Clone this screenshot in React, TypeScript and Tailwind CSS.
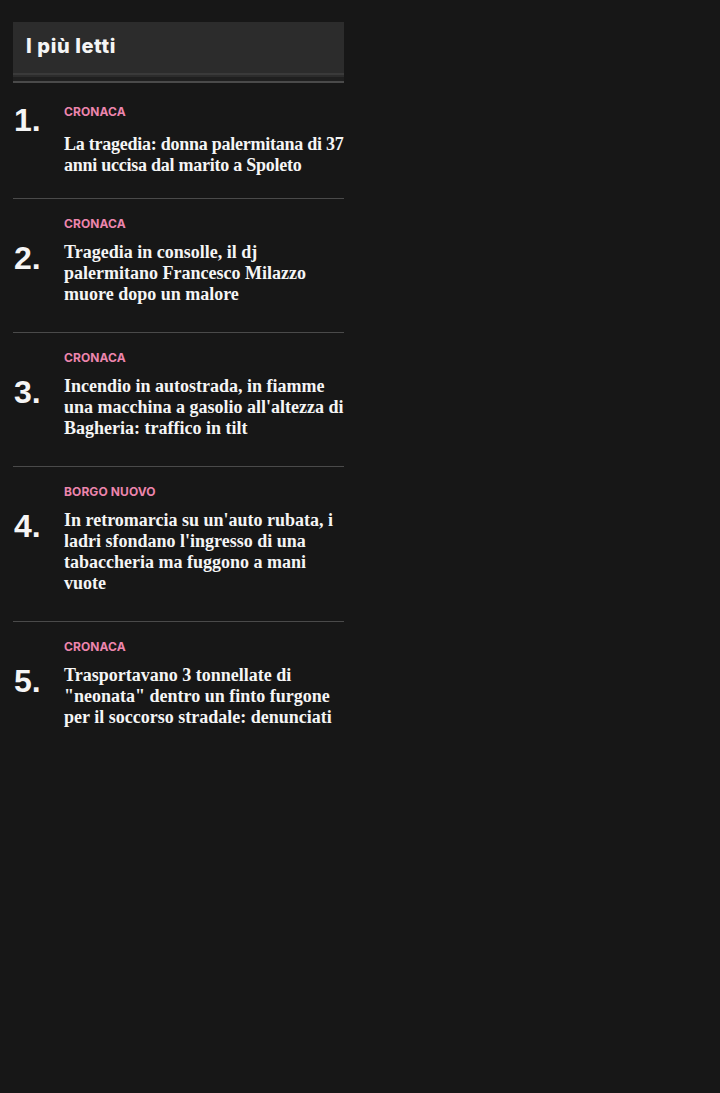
import React from "react";

type Item = { cat: string; lines: string[]; first?: boolean };

const items: Item[] = [
  { cat: "CRONACA", lines: ["La tragedia: donna palermitana di 37", "anni uccisa dal marito a Spoleto"], first: true },
  { cat: "CRONACA", lines: ["Tragedia in consolle, il dj", "palermitano Francesco Milazzo", "muore dopo un malore"] },
  { cat: "CRONACA", lines: ["Incendio in autostrada, in fiamme", "una macchina a gasolio all'altezza di", "Bagheria: traffico in tilt"] },
  { cat: "BORGO NUOVO", lines: ["In retromarcia su un'auto rubata, i", "ladri sfondano l'ingresso di una", "tabaccheria ma fuggono a mani", "vuote"] },
  { cat: "CRONACA", lines: ["Trasportavano 3 tonnellate di", "\"neonata\" dentro un finto furgone", "per il soccorso stradale: denunciati"] },
];

export default function App() {
  return (
    <div className="min-h-screen bg-[#171717] pt-[22px] pl-[13px]">
      <div className="w-[331px]">
        <div className="h-[51px] bg-[#2c2c2c] pl-[13px] pb-[3px] flex items-center">
          <h2 className="text-[20px] leading-[28px] font-extrabold tracking-[0.6px] text-[#f5f5f5] font-['Inter',sans-serif]">I più letti</h2>
        </div>
        <div className="h-[2px] bg-[#3a3a3a]" />
        <div className="h-[2px] bg-[#2c2c2c]" />
        <div className="h-[4px] bg-[#1f1f1f]" />
        <div className="h-[2px] bg-[#4a4a4a]" />
        <ol>
          {items.map((it, i) => (
            <li
              key={i}
              className={
                "flex " +
                (it.first ? "pt-[21px] pb-[22px] " : "pt-[17px] pb-[27px] ") +
                (i < items.length - 1 ? "border-b border-[#4a4a4a]" : "")
              }
            >
              <div className="w-[51px] shrink-0 pl-[1px]">
                <span
                  className={
                    "block text-[32px] leading-[32px] font-bold text-[#f5f5f5] font-['Liberation_Sans',Arial,sans-serif] " +
                    (it.first ? "mt-0" : "mt-[26px]")
                  }
                >
                  {i + 1}.
                </span>
              </div>
              <div className="flex-1 min-w-0">
                <div className="text-[12px] leading-[16px] font-bold tracking-[0.1px] text-[#ec85ad] font-['Inter',sans-serif]">
                  {it.cat}
                </div>
                <p
                  className={
                    "text-[18px] leading-[21px] font-bold text-[#f5f5f5] whitespace-nowrap font-['Liberation_Serif',serif] " +
                    (it.first ? "mt-[14px] tracking-[-0.25px]" : "mt-[10px]")
                  }
                >
                  {it.lines.map((l, j) => (
                    <React.Fragment key={j}>
                      {l}
                      {j < it.lines.length - 1 && <br />}
                    </React.Fragment>
                  ))}
                </p>
              </div>
            </li>
          ))}
        </ol>
      </div>
    </div>
  );
}
